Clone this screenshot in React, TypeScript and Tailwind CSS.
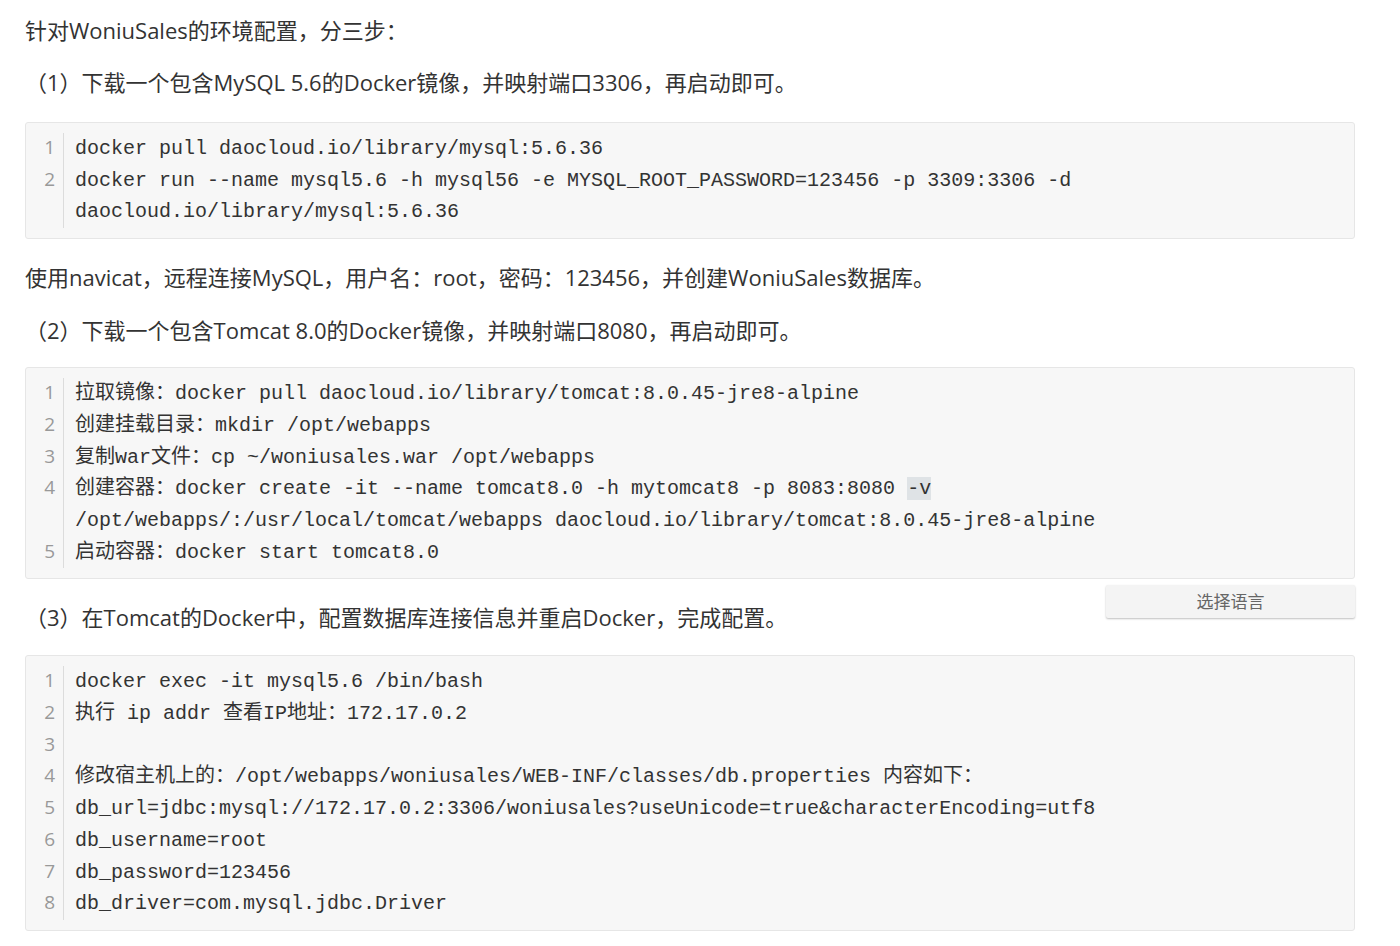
import type { ReactNode } from "react"

const sans = "font-['Open_Sans','Noto_Sans_CJK_SC',sans-serif]"
const mono = "font-['Liberation_Mono','Noto_Sans_CJK_SC',monospace]"

type Line = ReactNode[]

function CodeBlock({ lines, children }: { lines: Line[]; children?: ReactNode }) {
  return (
    <div className="relative rounded-[3px] border border-[#e6e6e6] bg-[#f7f7f7] py-[10px]">
      {lines.map((rows, i) => (
        <div key={i} className="flex">
          <div className={`w-[38px] shrink-0 border-r border-[#dcdcdc] pb-[2px] pr-[8px] text-right text-[19px] leading-[29.7px] text-[#999] ${sans}`}>
            {i + 1}
          </div>
          <div className={`pl-[11px] text-[20px] leading-[31.7px] text-[#333] ${mono} whitespace-pre`}>
            {rows.map((r, j) => (
              <div key={j}>{r === "" ? "\u00a0" : r}</div>
            ))}
          </div>
        </div>
      ))}
      {children}
    </div>
  )
}

function Para({ children, className = "" }: { children: ReactNode; className?: string }) {
  return <p className={`text-[22px] leading-[32px] text-[#333] ${sans} ${className}`}>{children}</p>
}

export default function App() {
  return (
    <div className="min-h-screen bg-white pl-[25px] pr-[45px] pt-[14px]">
      <Para>针对WoniuSales的环境配置，分三步：</Para>
      <Para className="mt-[20px]">（1）下载一个包含MySQL 5.6的Docker镜像，并映射端口3306，再启动即可。</Para>
      <div className="mt-[24px]">
        <CodeBlock
          lines={[
            ["docker pull daocloud.io/library/mysql:5.6.36"],
            [
              "docker run --name mysql5.6 -h mysql56 -e MYSQL_ROOT_PASSWORD=123456 -p 3309:3306 -d",
              "daocloud.io/library/mysql:5.6.36",
            ],
          ]}
        />
      </div>
      <Para className="mt-[22px]">使用navicat，远程连接MySQL，用户名：root，密码：123456，并创建WoniuSales数据库。</Para>
      <Para className="mt-[21px]">（2）下载一个包含Tomcat 8.0的Docker镜像，并映射端口8080，再启动即可。</Para>
      <div className="mt-[21px]">
        <CodeBlock
          lines={[
            ["拉取镜像：docker pull daocloud.io/library/tomcat:8.0.45-jre8-alpine"],
            ["创建挂载目录：mkdir /opt/webapps"],
            ["复制war文件：cp ~/woniusales.war /opt/webapps"],
            [
              <>
                创建容器：docker create -it --name tomcat8.0 -h mytomcat8 -p 8083:8080{" "}
                <span className="bg-[#dfe3e6]">-v</span>
              </>,
              "/opt/webapps/:/usr/local/tomcat/webapps daocloud.io/library/tomcat:8.0.45-jre8-alpine",
            ],
            ["启动容器：docker start tomcat8.0"],
          ]}
        >
          <div className="absolute right-[-1px] top-[calc(100%+7px)] flex h-[33px] w-[249px] items-center justify-center rounded-[2px] bg-[#f4f4f4] shadow-[0_1px_2px_rgba(0,0,0,0.25)]">
            <span className={`text-[17px] text-[#666] ${sans}`}>选择语言</span>
          </div>
        </CodeBlock>
      </div>
      <Para className="mt-[22px]">（3）在Tomcat的Docker中，配置数据库连接信息并重启Docker，完成配置。</Para>
      <div className="mt-[22px]">
        <CodeBlock
          lines={[
            ["docker exec -it mysql5.6 /bin/bash"],
            ["执行 ip addr 查看IP地址：172.17.0.2"],
            [""],
            ["修改宿主机上的：/opt/webapps/woniusales/WEB-INF/classes/db.properties 内容如下："],
            ["db_url=jdbc:mysql://172.17.0.2:3306/woniusales?useUnicode=true&characterEncoding=utf8"],
            ["db_username=root"],
            ["db_password=123456"],
            ["db_driver=com.mysql.jdbc.Driver"],
          ]}
        />
      </div>
    </div>
  )
}
